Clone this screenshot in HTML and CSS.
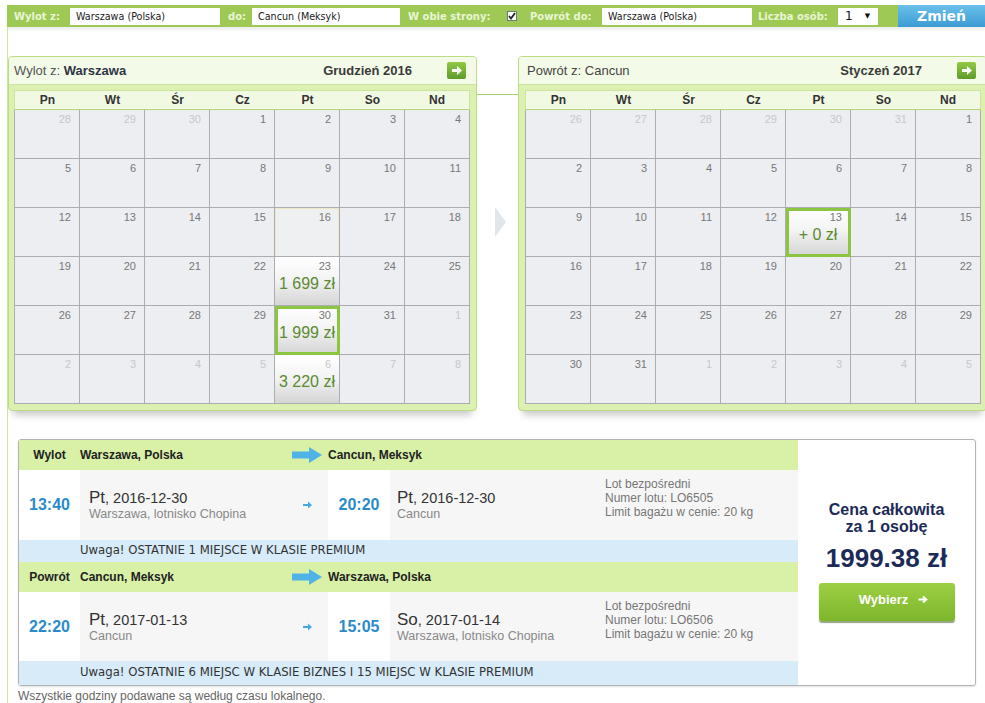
FILE: index.html
```html
<!DOCTYPE html>
<html lang="pl">
<head>
<meta charset="utf-8">
<title>Wyniki lotów</title>
<link rel="stylesheet" href="styles.css">
</head>
<body>
<div class="topbar">
  <span class="lbl l1">Wylot z:</span>
  <span class="inp w150">Warszawa (Polska)</span>
  <span class="lbl l2">do:</span>
  <span class="inp w148">Cancun (Meksyk)</span>
  <span class="lbl l3">W obie strony:</span>
  <span class="chk"><svg width="8" height="8" viewBox="0 0 8 8"><path d="M1 4 L3 6.5 L7 1" fill="none" stroke="#222" stroke-width="1.8"/></svg></span>
  <span class="lbl l4">Powrót do:</span>
  <span class="inp w150">Warszawa (Polska)</span>
  <span class="lbl l5">Liczba osób:</span>
  <span class="sel-box"><span>1</span><span class="caret">▼</span></span>
  <span class="spacer"></span>
  <span class="zmien">Zmień</span>
</div>

<div class="main">
  <div class="cals">
    <div class="cal">
      <div class="cal-head">
        <span class="ttl">Wylot z: <b>Warszawa</b></span>
        <span class="month">Grudzień 2016</span>
        <span class="nextbtn"><svg width="10" height="9" viewBox="0 0 10 9"><path d="M0 3 H5 V0 L10 4.5 L5 9 V6 H0 Z" fill="#fff"/></svg></span>
      </div>
      <div class="cal-body">
        <div class="grid">
          <div class="dn">Pn</div><div class="dn">Wt</div><div class="dn">Śr</div><div class="dn">Cz</div><div class="dn">Pt</div><div class="dn">So</div><div class="dn">Nd</div>
          <div class="d o">28</div><div class="d o">29</div><div class="d o">30</div><div class="d">1</div><div class="d">2</div><div class="d">3</div><div class="d">4</div>
          <div class="d">5</div><div class="d">6</div><div class="d">7</div><div class="d">8</div><div class="d">9</div><div class="d">10</div><div class="d">11</div>
          <div class="d">12</div><div class="d">13</div><div class="d">14</div><div class="d">15</div><div class="d hl">16</div><div class="d">17</div><div class="d">18</div>
          <div class="d">19</div><div class="d">20</div><div class="d">21</div><div class="d">22</div><div class="d pr">23<span class="pz">1 699 zł</span></div><div class="d">24</div><div class="d">25</div>
          <div class="d">26</div><div class="d">27</div><div class="d">28</div><div class="d">29</div><div class="d pr sel">30<span class="pz">1 999 zł</span></div><div class="d">31</div><div class="d o">1</div>
          <div class="d o">2</div><div class="d o">3</div><div class="d o">4</div><div class="d o">5</div><div class="d o pr">6<span class="pz">3 220 zł</span></div><div class="d o">7</div><div class="d o">8</div>
        </div>
      </div>
    </div>

    <div class="gapcol">
      <div class="conn"></div>
      <div class="chev"></div>
    </div>

    <div class="cal cal2">
      <div class="cal-head">
        <span class="ttl ttl2">Powrót z: Cancun</span>
        <span class="month">Styczeń 2017</span>
        <span class="nextbtn"><svg width="10" height="9" viewBox="0 0 10 9"><path d="M0 3 H5 V0 L10 4.5 L5 9 V6 H0 Z" fill="#fff"/></svg></span>
      </div>
      <div class="cal-body">
        <div class="grid">
          <div class="dn">Pn</div><div class="dn">Wt</div><div class="dn">Śr</div><div class="dn">Cz</div><div class="dn">Pt</div><div class="dn">So</div><div class="dn">Nd</div>
          <div class="d o">26</div><div class="d o">27</div><div class="d o">28</div><div class="d o">29</div><div class="d o">30</div><div class="d o">31</div><div class="d">1</div>
          <div class="d">2</div><div class="d">3</div><div class="d">4</div><div class="d">5</div><div class="d">6</div><div class="d">7</div><div class="d">8</div>
          <div class="d">9</div><div class="d">10</div><div class="d">11</div><div class="d">12</div><div class="d pr sel">13<span class="pz">+ 0 zł</span></div><div class="d">14</div><div class="d">15</div>
          <div class="d">16</div><div class="d">17</div><div class="d">18</div><div class="d">19</div><div class="d">20</div><div class="d">21</div><div class="d">22</div>
          <div class="d">23</div><div class="d">24</div><div class="d">25</div><div class="d">26</div><div class="d">27</div><div class="d">28</div><div class="d">29</div>
          <div class="d">30</div><div class="d">31</div><div class="d o">1</div><div class="d o">2</div><div class="d o">3</div><div class="d o">4</div><div class="d o">5</div>
        </div>
      </div>
    </div>
  </div>

  <div class="flight">
    <div class="legs">
      <div class="lh">
        <span class="c1">Wylot</span>
        <span class="c2">Warszawa, Polska</span>
        <span class="c3"><svg width="30" height="16" viewBox="0 0 30 16"><path d="M0 4.5 H17 V0 L30 8 L17 16 V11.5 H0 Z" fill="#4fb3e6"/></svg></span>
        <span class="c45">Cancun, Meksyk</span>
      </div>
      <div class="ld">
        <div class="c1 t">13:40</div>
        <div class="c2 g">
          <div class="dt"><span class="wd">Pt</span>, 2016-12-30</div>
          <div class="pl">Warszawa, lotnisko Chopina</div>
        </div>
        <div class="c3 g ar"><svg width="9" height="8" viewBox="0 0 9 8"><path d="M0 3 H5 V0.5 L9 4 L5 7.5 V5 H0 Z" fill="#43a9e0"/></svg></div>
        <div class="c4 t">20:20</div>
        <div class="c5 g">
          <div class="dt"><span class="wd">Pt</span>, 2016-12-30</div>
          <div class="pl">Cancun</div>
        </div>
        <div class="c6 g info">Lot bezpośredni<br>Numer lotu: LO6505<br>Limit bagażu w cenie: 20 kg</div>
      </div>
      <div class="lw">Uwaga! OSTATNIE 1 MIEJSCE W KLASIE PREMIUM</div>

      <div class="lh">
        <span class="c1">Powrót</span>
        <span class="c2">Cancun, Meksyk</span>
        <span class="c3"><svg width="30" height="16" viewBox="0 0 30 16"><path d="M0 4.5 H17 V0 L30 8 L17 16 V11.5 H0 Z" fill="#4fb3e6"/></svg></span>
        <span class="c45">Warszawa, Polska</span>
      </div>
      <div class="ld ld2">
        <div class="c1 t">22:20</div>
        <div class="c2 g">
          <div class="dt"><span class="wd">Pt</span>, 2017-01-13</div>
          <div class="pl">Cancun</div>
        </div>
        <div class="c3 g ar"><svg width="9" height="8" viewBox="0 0 9 8"><path d="M0 3 H5 V0.5 L9 4 L5 7.5 V5 H0 Z" fill="#43a9e0"/></svg></div>
        <div class="c4 t">15:05</div>
        <div class="c5 g">
          <div class="dt"><span class="wd">So</span>, 2017-01-14</div>
          <div class="pl">Warszawa, lotnisko Chopina</div>
        </div>
        <div class="c6 g info">Lot bezpośredni<br>Numer lotu: LO6506<br>Limit bagażu w cenie: 20 kg</div>
      </div>
      <div class="lw lw2">Uwaga! OSTATNIE 6 MIEJSC W KLASIE BIZNES I 15 MIEJSC W KLASIE PREMIUM</div>
    </div>
    <div class="price">
      <div class="plabel">Cena całkowita<br>za 1 osobę</div>
      <div class="pval">1999.38 zł</div>
      <div class="wybierz">Wybierz <svg width="10" height="9" viewBox="0 0 10 9"><path d="M0.5 4.5 H8 M5 1.5 L8.3 4.5 L5 7.5" fill="none" stroke="#fff" stroke-width="2"/></svg></div>
    </div>
  </div>
  <div class="foot">Wszystkie godziny podawane są według czasu lokalnego.</div>
</div>
</body>
</html>
```
FILE: styles.css
```css
* { box-sizing: border-box; }
html, body { margin: 0; padding: 0; background: #fff; }
body {
  width: 985px;
  height: 703px;
  overflow: hidden;
  font-family: "Liberation Sans", Arial, sans-serif;
  color: #333;
}

/* ---------- top search bar ---------- */
.topbar {
  display: flex;
  align-items: center;
  height: 22px;
  margin: 5px 0 0 7px;
  background: #9fc955;
  font-family: "DejaVu Sans", Verdana, sans-serif;
  font-size: 10px;
  box-shadow: 0 3px 2px #efefef;
}
.lbl { color: #e9f5d4; font-weight: bold; white-space: nowrap; }
.l1 { width: 63px; padding-left: 7px; }
.l2 { width: 32px; padding-left: 8px; }
.l3 { width: 107px; padding-left: 8px; }
.l4 { width: 85px; padding-left: 13px; }
.l5 { width: 86px; padding-left: 6px; }
.inp {
  height: 17px;
  background: #fff;
  color: #222;
  padding-left: 6px;
  line-height: 17px;
  font-size: 9.6px;
  white-space: nowrap;
}
.w150 { width: 150px; }
.w148 { width: 148px; }
.chk {
  width: 10px;
  height: 10px;
  background: #fff;
  border: 1px solid #777;
  display: flex;
  align-items: center;
  justify-content: center;
}
.sel-box {
  width: 40px;
  height: 17px;
  background: #fff;
  display: flex;
  align-items: center;
  padding-left: 7px;
  font-size: 12px;
  color: #111;
}
.caret { font-size: 7px; margin-left: 12px; }
.spacer { flex: 1; }
.zmien {
  width: 87px;
  height: 22px;
  background: linear-gradient(#6ac0ea, #3c9bd4);
  color: #fff;
  font-weight: bold;
  font-size: 14px;
  text-align: center;
  line-height: 22px;
}

/* ---------- main area ---------- */
.main {
  margin-left: 7px;
  border-left: 1px solid #cfe6a6;
  padding-top: 29px;
  height: 676px;
}
.cals { display: flex; }
.cal {
  width: 469px;
  flex: none;
  border: 1px solid #bcdb83;
  border-radius: 4px;
  background: #dcf0b2;
  box-shadow: 0 9px 7px -5px rgba(0, 0, 0, 0.22);
}
.cal-head {
  height: 28px;
  display: flex;
  align-items: center;
  background: #f4fae8;
  border-bottom: 1px solid #cbe4a0;
  border-radius: 3px 3px 0 0;
  padding: 0 10px 0 5px;
  font-size: 13px;
}
.cal2 .cal-head { padding-left: 8px; }
.ttl { color: #555; }
.ttl b { color: #2e3547; }
.ttl2 { color: #444; }
.month { margin-left: auto; font-weight: bold; color: #3a3a3a; }
.nextbtn {
  margin-left: 35px;
  width: 19px;
  height: 17px;
  border-radius: 2px;
  background: linear-gradient(#93ca45, #5e9b2b);
  display: flex;
  align-items: center;
  justify-content: center;
}
.cal-body { padding: 5px 6px 6px 5px; }
.cal2 .cal-body { padding-left: 6px; }
.grid {
  display: grid;
  grid-template-columns: 66px repeat(6, 65px);
  width: 456px;
}
.dn {
  height: 20px;
  background: #f2f9e3;
  border-top: 1px solid #cbe49e;
  border-bottom: 1px solid #b5d47c;
  text-align: center;
  font-weight: bold;
  font-size: 12px;
  line-height: 18px;
  color: #333;
}
.dn:first-child { border-left: 1px solid #cbe49e; }
.dn:nth-child(7) { border-right: 1px solid #cbe49e; }
.d {
  height: 49px;
  background: #eceef1;
  border-right: 1px solid #abadb0;
  border-bottom: 1px solid #abadb0;
  text-align: right;
  padding: 3px 8px 0 0;
  font-size: 11px;
  line-height: 13px;
  color: #777;
}
.grid .d:nth-child(7n+1) { border-left: 1px solid #abadb0; }
.d.o { color: #c6c8ca; }
.d.hl { box-shadow: inset 1px 1px 0 #efe6c2, inset -1px 0 0 #efe6c2; background: #eef0f2; }
.d.pr { background: linear-gradient(#ffffff 0%, #f4f4f4 45%, #d5d5d5 100%); }
.d.sel { outline: 3px solid #8cc540; outline-offset: -3px; }
.pz {
  display: block;
  text-align: center;
  margin: 2px -8px 0 0;
  font-size: 16px;
  line-height: 18px;
  color: #5b8a31;
}

.gapcol { width: 41px; flex: none; }
.conn { margin-top: 38px; height: 1px; background: #a9d16f; }
.chev {
  margin: 112px 0 0 18px;
  width: 0;
  height: 0;
  border-left: 11px solid #e1e6eb;
  border-top: 15px solid transparent;
  border-bottom: 15px solid transparent;
}

/* ---------- flight details ---------- */
.flight {
  margin: 28px 0 0 10px;
  width: 958px;
  border: 1px solid #b3b3b3;
  border-radius: 3px;
  display: flex;
  box-shadow: 0 1px 2px rgba(0, 0, 0, 0.12);
}
.legs { width: 779px; flex: none; }
.c1 { width: 61px; flex: none; text-align: center; }
.c2 { width: 210px; flex: none; }
.c3 { width: 38px; flex: none; }
.c4 { width: 62px; flex: none; text-align: center; }
.c5 { width: 208px; flex: none; }
.c6 { flex: 1; }
.c45 { flex: 1; padding-left: 0; }
.lh {
  height: 30px;
  display: flex;
  align-items: center;
  background: #d9f0a7;
  font-weight: bold;
  font-size: 12px;
  color: #222;
}
.lh .c3 { padding-left: 2px; display: flex; align-items: center; }
.ld { height: 70px; display: flex; background: #fff; }
.ld2 { height: 69px; }
.ld > div { display: flex; flex-direction: column; justify-content: center; }
.g { background: #f6f6f6; }
.t { font-weight: bold; font-size: 16px; color: #2b8bca; align-items: center; }
.c2.g { padding: 0 0 0 9px; }
.c5.g { padding: 0 0 0 7px; }
.dt { font-size: 14.5px; color: #333; line-height: 18px; }
.wd { font-size: 17px; }
.pl { font-size: 12.5px; color: #888; line-height: 14px; }
.ar { align-items: flex-start; padding-left: 13px; }
.ld > .info {
  justify-content: flex-start;
  padding: 7px 0 0 7px;
  font-size: 12px;
  line-height: 14px;
  color: #777;
}
.lw {
  height: 22px;
  background: #d7ebf8;
  padding-left: 61px;
  font-family: "DejaVu Sans", Verdana, sans-serif;
  font-size: 11.7px;
  line-height: 21px;
  color: #333;
}
.lw2 { height: 24px; line-height: 23px; }

.price {
  flex: 1;
  display: flex;
  flex-direction: column;
  align-items: center;
  justify-content: center;
  padding-bottom: 4px;
  color: #1c2a58;
}
.plabel {
  font-weight: bold;
  font-size: 16px;
  line-height: 17px;
  text-align: center;
}
.pval {
  font-weight: bold;
  font-size: 26px;
  line-height: 30px;
  margin-top: 8px;
}
.wybierz {
  margin-top: 10px;
  width: 136px;
  height: 38px;
  border-radius: 3px;
  background: linear-gradient(#9dcf43, #7db62c);
  box-shadow: 0 2px 1px rgba(60, 90, 20, 0.55);
  color: #fff;
  font-weight: bold;
  font-size: 13px;
  display: flex;
  align-items: center;
  justify-content: center;
  gap: 10px;
  padding: 0 0 4px 14px;
}
.foot {
  margin: 3px 0 0 10px;
  font-size: 12px;
  line-height: 14px;
  color: #666;
}
```
